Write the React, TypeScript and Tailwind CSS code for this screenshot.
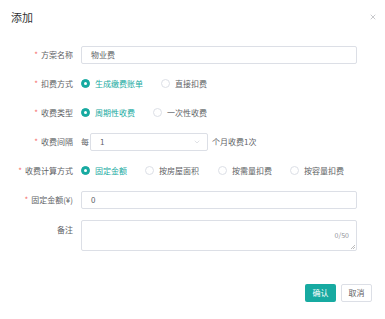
import { ChevronDown, X } from "lucide-react";

const Label = ({ children, required = true }: { children: React.ReactNode; required?: boolean }) => (
  <div className="flex items-center justify-end pr-[8px] text-[8px] text-[#606266]">
    {required && <span className="mr-[3px] text-[#f56c6c]">*</span>}
    {children}
  </div>
);

const Radio = ({ checked, label, className = "" }: { checked?: boolean; label: string; className?: string }) => (
  <label className={`flex items-center ${className}`}>
    <span
      className={`flex h-[9px] w-[9px] items-center justify-center rounded-full border ${
        checked ? "border-[#17aaa1] bg-[#17aaa1]" : "border-[#dcdfe6] bg-white"
      }`}
    >
      {checked && <span className="h-[3px] w-[3px] rounded-full bg-white" />}
    </span>
    <span className={`ml-[5px] text-[8px] ${checked ? "text-[#17aaa1]" : "text-[#606266]"}`}>{label}</span>
  </label>
);

export default function App() {
  return (
    <div className="h-[319px] w-[385px] bg-white font-['Noto_Sans_CJK_SC',sans-serif]">
      <div className="flex items-center justify-between pl-[11px] pr-[8px] pt-[9px]">
        <span className="text-[11px] text-[#303133]">添加</span>
        <X className="h-[8px] w-[8px] text-[#909399]" strokeWidth={1.5} />
      </div>

      <div className="mt-[20px] grid grid-cols-[81px_1fr] gap-y-[11px] pr-[28px]">
        <Label>方案名称</Label>
        <div className="flex h-[18px] items-center rounded-[2px] border border-[#dcdfe6] pl-[9px] text-[8px] text-[#606266]">
          物业费
        </div>

        <Label>扣费方式</Label>
        <div className="flex h-[18px] items-center">
          <Radio checked label="生成缴费账单" className="w-[80px]" />
          <Radio label="直接扣费" />
        </div>

        <Label>收费类型</Label>
        <div className="flex h-[18px] items-center">
          <Radio checked label="周期性收费" className="w-[72px]" />
          <Radio label="一次性收费" />
        </div>

        <Label>收费间隔</Label>
        <div className="flex h-[18px] items-center text-[8px] text-[#606266]">
          <span className="mr-[1px]">每</span>
          <div className="flex h-[18px] w-[118px] items-center justify-between rounded-[2px] border border-[#dcdfe6] pl-[9px] pr-[6px]">
            <span>1</span>
            <ChevronDown className="h-[8px] w-[8px] text-[#c0c4cc]" strokeWidth={1.5} />
          </div>
          <span className="ml-[4px]">个月收费1次</span>
        </div>

        <Label>收费计算方式</Label>
        <div className="flex h-[18px] items-center">
          <Radio checked label="固定金额" className="w-[64px]" />
          <Radio label="按房屋面积" className="w-[73px]" />
          <Radio label="按需量扣费" className="w-[72px]" />
          <Radio label="按容量扣费" />
        </div>

        <Label>固定金额(¥)</Label>
        <div className="flex h-[18px] items-center rounded-[2px] border border-[#dcdfe6] pl-[9px] text-[8px] text-[#606266]">
          0
        </div>

        <div className="flex items-start justify-end pr-[8px] pt-[4px] text-[8px] text-[#606266]">备注</div>
        <div className="relative h-[31px] rounded-[2px] border border-[#dcdfe6]">
          <span className="absolute bottom-[9px] right-[7px] text-[7px] text-[#909399]">0/50</span>
          <svg className="absolute bottom-[1px] right-[1px]" width="5" height="5" viewBox="0 0 5 5">
            <path d="M1 5 L5 1 M3 5 L5 3" stroke="#a0a0a0" strokeWidth="0.7" />
          </svg>
        </div>
      </div>

      <div className="mt-[33px] flex justify-end gap-[5px] pr-[13px]">
        <button className="h-[18px] w-[31px] rounded-[2px] bg-[#17aaa1] text-[8px] text-white">确认</button>
        <button className="h-[18px] w-[31px] rounded-[2px] border border-[#dcdfe6] bg-white text-[8px] text-[#606266]">
          取消
        </button>
      </div>
    </div>
  );
}
